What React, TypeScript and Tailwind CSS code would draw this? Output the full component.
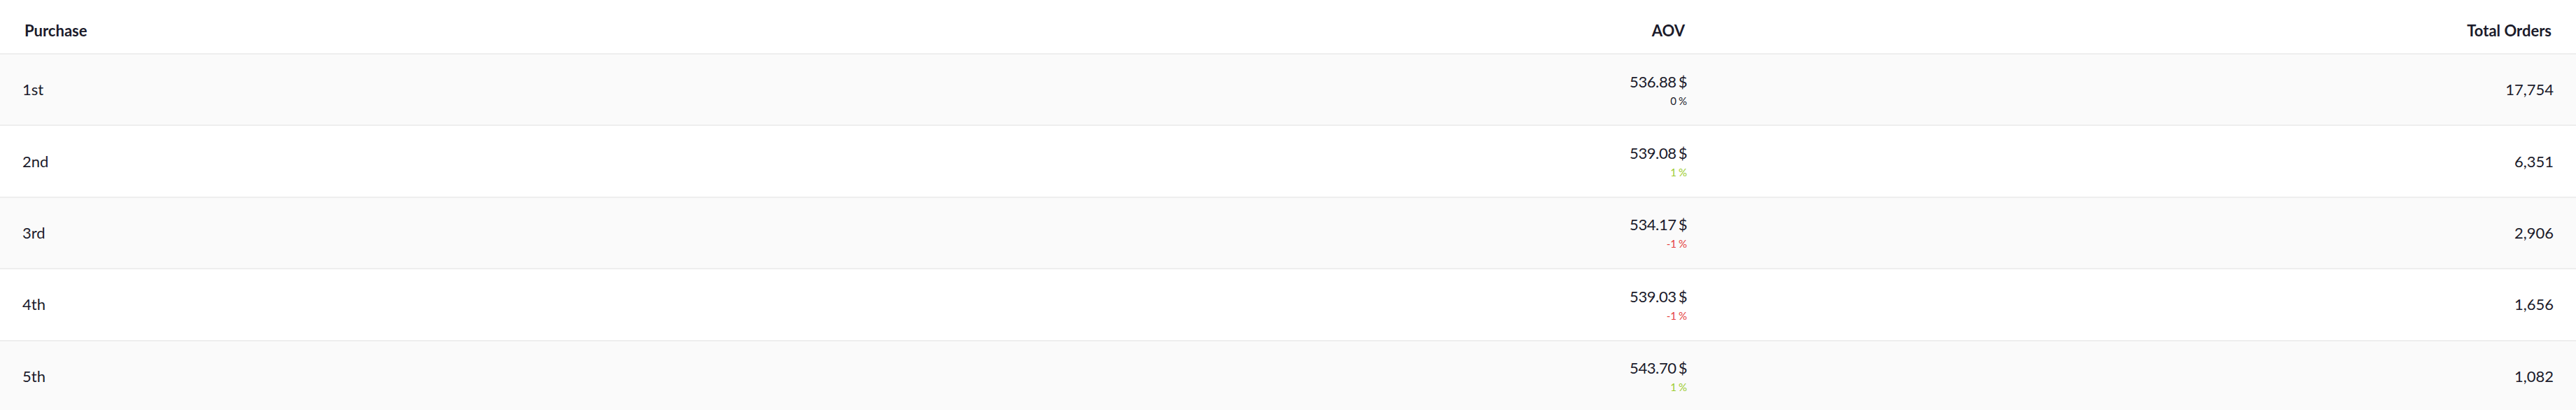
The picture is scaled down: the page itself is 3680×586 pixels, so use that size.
const rows = [
  { label: '1st', aov: '536.88', change: '0', trend: 'flat', orders: '17,754' },
  { label: '2nd', aov: '539.08', change: '1', trend: 'up', orders: '6,351' },
  { label: '3rd', aov: '534.17', change: '-1', trend: 'down', orders: '2,906' },
  { label: '4th', aov: '539.03', change: '-1', trend: 'down', orders: '1,656' },
  { label: '5th', aov: '543.70', change: '1', trend: 'up', orders: '1,082' },
];

const trendColor: Record<string, string> = {
  flat: 'text-[#1b1b2b]',
  up: 'text-[#9ccc2e]',
  down: 'text-[#e53e3e]',
};

export default function App() {
  return (
    <div className="w-full bg-white text-[#1b1b2b] font-['Lato','Noto_Sans',sans-serif]">
      {/* header */}
      <div className="grid grid-cols-[1221px_1221px_1fr] h-[78px] border-b-2 border-[#eeeeee] text-[22px] font-bold leading-[26px]">
        <div className="px-[35px] pt-[31px]">Purchase</div>
        <div className="px-[35px] pt-[31px] text-right">AOV</div>
        <div className="px-[35px] pt-[31px] text-right">Total Orders</div>
      </div>

      {rows.map((r, i) => (
        <div
          key={r.label}
          className={`grid grid-cols-[1221px_1221px_1fr] h-[102.4px] border-b-2 border-[#eeeeee] items-center text-[22px] leading-[26px] ${
            i % 2 === 0 ? 'bg-[#fafafa]' : 'bg-white'
          }`}
        >
          <div className="px-8">{r.label}</div>
          <div className="px-8 text-right flex flex-col items-end gap-[5px]">
            <span className="tracking-[-0.4px]">
              {r.aov}
              <span className="ml-[3px]">$</span>
            </span>
            <span className={`text-[15px] leading-[18px] ${trendColor[r.trend]}`}>
              {r.change}
              <span className="ml-[3px]">%</span>
            </span>
          </div>
          <div className="px-8 text-right">{r.orders}</div>
        </div>
      ))}
    </div>
  );
}
